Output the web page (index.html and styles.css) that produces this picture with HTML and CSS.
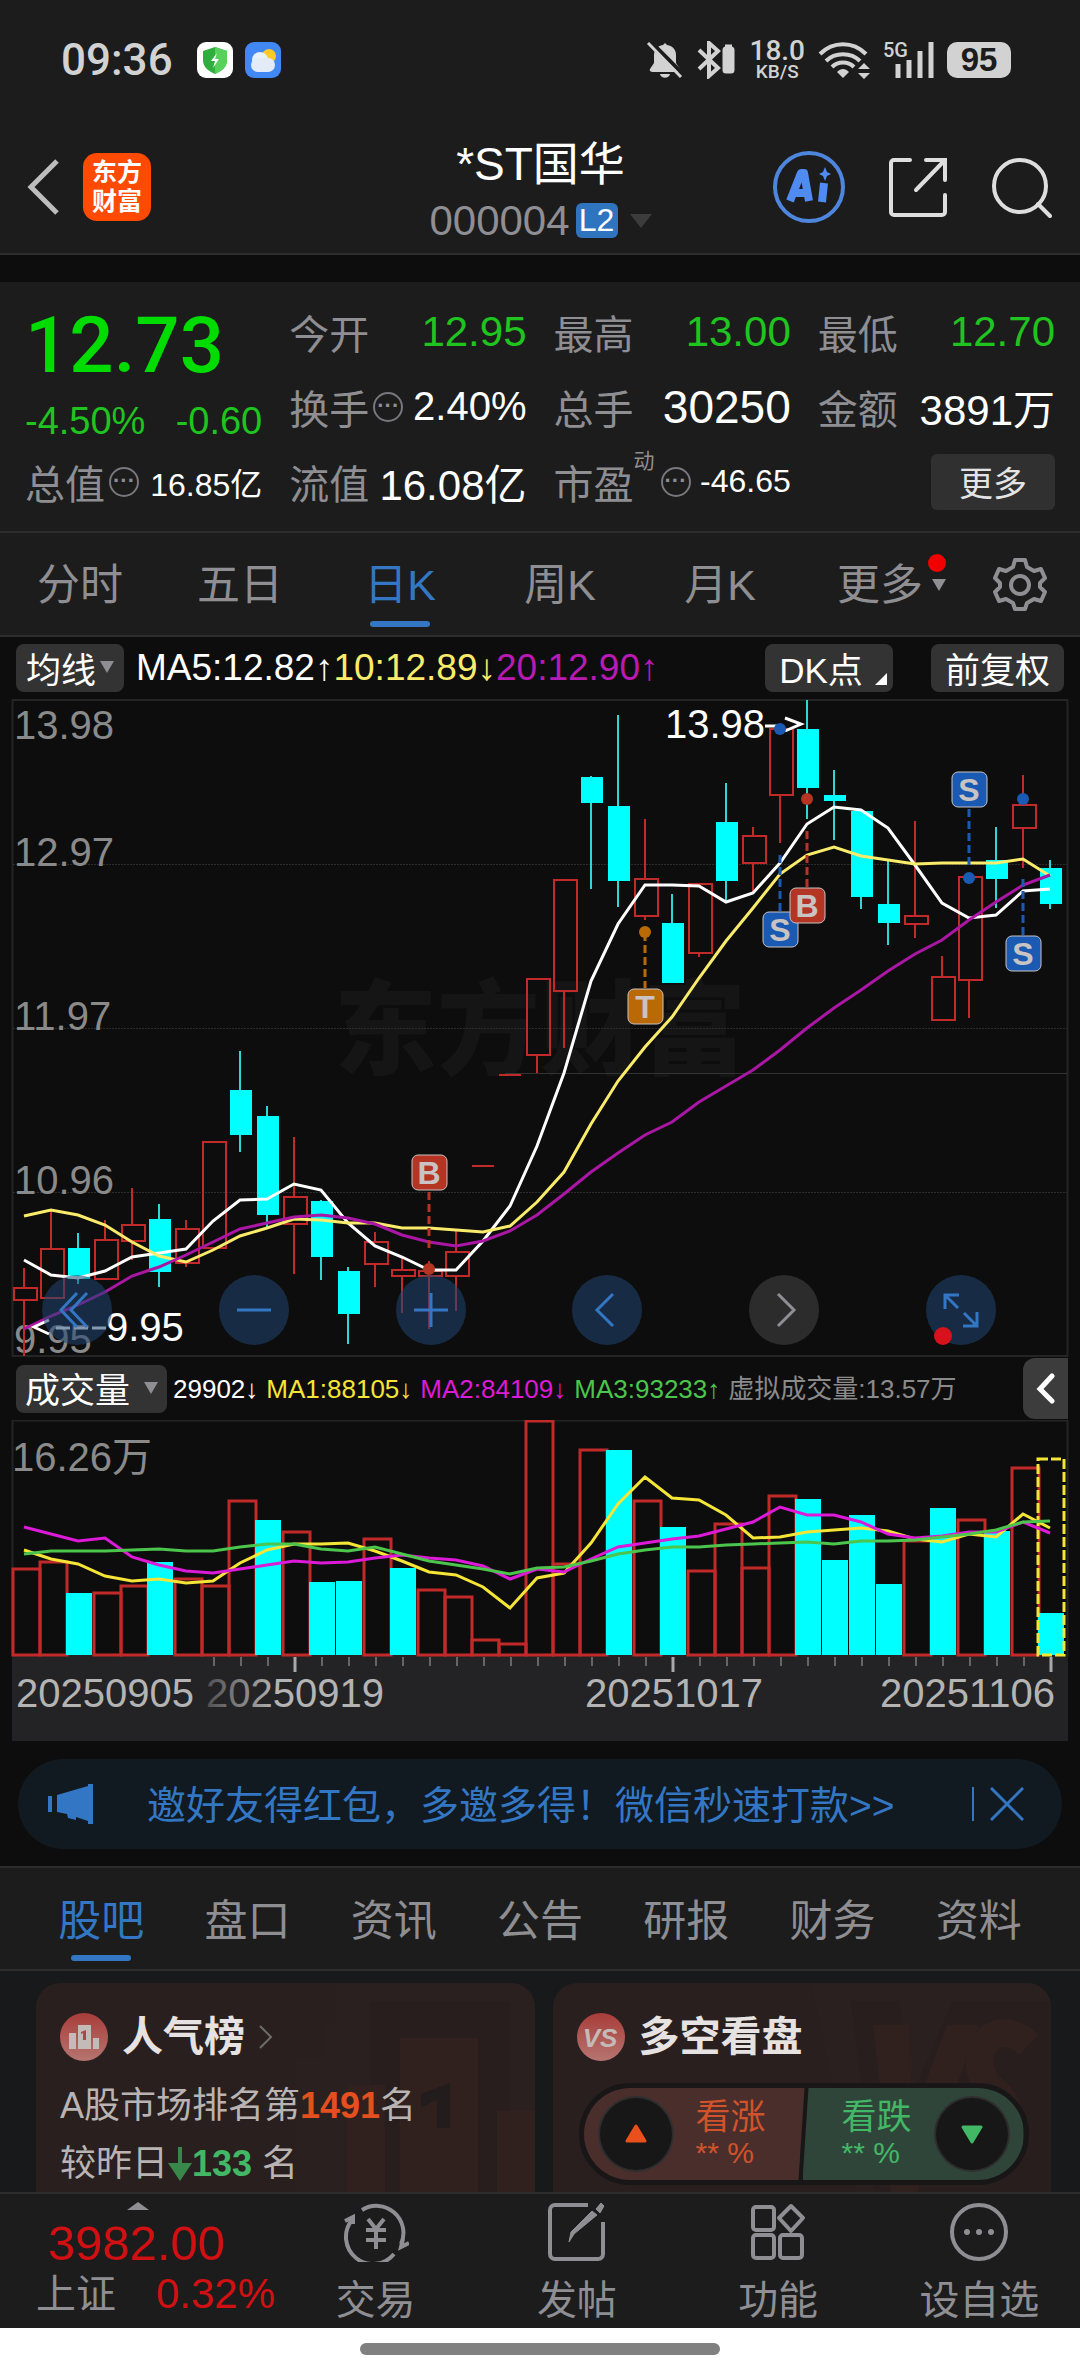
FILE: index.html
```html
<!DOCTYPE html>
<html lang="zh-CN">
<head>
    <meta charset="UTF-8">
    <meta name="viewport" content="width=device-width, initial-scale=1.0">
    <title>*ST国华 000004</title>
    <link rel="stylesheet" href="styles.css">
</head>
<body>
<div class="app">
    <div class="status-bar">
        <span class="clock">09:36</span>
        <svg class="status-app" width="36" height="36" viewBox="0 0 36 36">
            <rect width="36" height="36" rx="9" fill="#fff"/>
            <path d="M18 5l12 4v9c0 7-5 11-12 14C11 29 6 25 6 18V9z" fill="#2fae3e"/>
            <path d="M18 5l12 4v9c0 7-5 11-12 14z" fill="#57d05c"/>
            <path d="M20 11l-6 8h4l-2 7 6-9h-4z" fill="#fff"/>
        </svg>
        <svg class="status-app" width="36" height="36" viewBox="0 0 36 36">
            <rect width="36" height="36" rx="9" fill="#4288f5"/>
            <circle cx="24" cy="14" r="7" fill="#ffc928"/>
            <circle cx="15" cy="18" r="8" fill="#e9f1fb"/>
            <rect x="6" y="16" width="24" height="14" rx="7" fill="#e3ecf6"/>
        </svg>
        <div class="status-right">
            <svg width="36" height="36" viewBox="0 0 36 36" fill="#d2d2d2">
                <path d="M18 1l2 2c6 1 9 5 9 10v8l4 6c0 2-1 3-3 3H6c-2 0-4-1-3-3l4-6v-8c0-5 3-9 9-10z"/>
                <path d="M13 32h10c-1 5-9 5-10 0z"/>
                <path d="M2 -2l34 34" stroke="#1c1c1c" stroke-width="4"/>
                <path d="M1 1l33 34" stroke="#d2d2d2" stroke-width="3"/>
            </svg>
            <svg width="40" height="38" viewBox="0 0 40 38" fill="none" stroke="#d2d2d2" stroke-width="4">
                <path d="M3 9l19 18-9 8V2l9 8L3 28"/>
                <rect x="28" y="7" width="9" height="24" rx="2" fill="#d2d2d2" stroke-width="3"/>
                <path d="M29 5h7" stroke-width="3"/>
            </svg>
            <div class="net-speed"><b>18.0</b><span>KB/S</span></div>
            <svg width="52" height="38" viewBox="0 0 52 38" fill="none" stroke="#d2d2d2" stroke-width="4">
                <path d="M2 13c13-13 33-13 46 0M8 20c9-9 25-9 34 0M14 26c6-6 16-6 22 0"/>
                <path d="M19 31c4-4 8-4 12 0l-6 6z" fill="#d2d2d2" stroke="none"/>
                <path d="M46 22l6 6H40zM46 38l6-6H40z" fill="#d2d2d2" stroke="none"/>
            </svg>
            <div class="signal">
                <span>5G</span>
                <svg width="40" height="38" viewBox="0 0 40 38" stroke="#d2d2d2" stroke-width="5">
                    <path d="M4 23v14M15 19v18M26 10v27M37 1v36"/>
                </svg>
            </div>
            <div class="battery">95</div>
        </div>
    </div>

    <header class="title-bar">
        <button class="icon-btn back" aria-label="返回">
            <svg width="34" height="56" viewBox="0 0 34 56" fill="none" stroke="#bdbdbd" stroke-width="5">
                <path d="M31 2L5 28l26 26"/>
            </svg>
        </button>
        <div class="brand"><span>东方</span><span>财富</span></div>
        <div class="stock">
            <h1>*ST国华</h1>
            <div class="code">000004<span class="level">L2</span><i class="caret dark"></i></div>
        </div>
        <div class="title-actions">
            <button class="icon-btn" aria-label="AI">
                <svg width="74" height="74" viewBox="0 0 74 74">
                    <circle cx="37" cy="37" r="34" fill="none" stroke="#4f86dd" stroke-width="4"/>
                    <g fill="none" stroke="#4f8bf0" stroke-width="8" stroke-linejoin="round">
                        <path d="M18 51l11-28h3l5 28M24 43h12M52 33l-2 19"/>
                    </g>
                    <path d="M53 17l2 5 4 2-4 2-2 5-2-5-4-2 4-2z" fill="#4f8bf0"/>
                </svg>
            </button>
            <button class="icon-btn" aria-label="分享">
                <svg width="60" height="62" viewBox="0 0 60 62" fill="none" stroke="#dedede" stroke-width="4" stroke-linecap="round">
                    <path d="M22 4H6a3 3 0 0 0-3 3v49a3 3 0 0 0 3 3h48a3 3 0 0 0 3-3V39"/>
                    <path d="M38 4h19v20M56 5L28 34"/>
                </svg>
            </button>
            <button class="icon-btn" aria-label="搜索">
                <svg width="62" height="62" viewBox="0 0 62 62" fill="none" stroke="#dedede" stroke-width="4" stroke-linecap="round">
                    <circle cx="30" cy="30" r="26"/>
                    <path d="M48 48l12 12"/>
                </svg>
            </button>
        </div>
    </header>

    <section class="quote">
        <div class="price-box">
            <div class="price">12.73</div>
            <div class="change"><span>-4.50%</span><span>-0.60</span></div>
        </div>
        <div class="cell"><span class="name">今开</span><b class="down">12.95</b></div>
        <div class="cell"><span class="name">最高</span><b class="down">13.00</b></div>
        <div class="cell"><span class="name">最低</span><b class="down">12.70</b></div>
        <div class="cell"><span class="name">换手</span><i class="tip">···</i><b class="mid">2.40%</b></div>
        <div class="cell"><span class="name">总手</span><b class="big">30250</b></div>
        <div class="cell"><span class="name">金额</span><b>3891万</b></div>
        <div class="cell"><span class="name">总值</span><i class="tip">···</i><b class="small">16.85亿</b></div>
        <div class="cell"><span class="name">流值</span><b>16.08亿</b></div>
        <div class="cell"><span class="name">市盈<sup>动</sup></span><i class="tip after-sup">···</i><b class="small">-46.65</b></div>
        <div class="cell"><button class="more">更多</button></div>
    </section>

    <nav class="period">
        <a href="#">分时</a>
        <a href="#">五日</a>
        <a href="#" class="active">日K</a>
        <a href="#">周K</a>
        <a href="#">月K</a>
        <a href="#" class="has-dot">更多<i class="caret"></i></a>
        <button class="icon-btn gear" aria-label="设置">
            <svg width="54" height="54" viewBox="0 0 54 54" fill="none" stroke="#8e8e93" stroke-width="4">
                <path d="M22 3h10l2 7 7 4 7-2 4 9-5 5v4l5 5-4 9-7-2-7 4-2 6H22l-2-6-7-4-7 2-4-9 5-5v-4l-5-5 4-9 7 2 7-4z" stroke-linejoin="round"/>
                <circle cx="27" cy="28" r="9"/>
            </svg>
        </button>
    </nav>

    <section class="chart">
        <div class="chart-head">
            <button class="chip">均线<i class="caret"></i></button>
            <div class="ma-values">
                <span class="white">MA5:12.82↑</span><span class="yellow">10:12.89↓</span><span class="purple">20:12.90↑</span>
            </div>
            <button class="chip dk">DK点<i class="corner"></i></button>
            <button class="chip right">前复权</button>
        </div>
        <div class="k-wrap">
            <svg id="kline" viewBox="0 698 1080 658"></svg>
            <div class="k-tools">
                <button aria-label="最左"><svg viewBox="0 0 70 70"><path d="M35 18L19 35l16 17M45 18L29 35l16 17"/></svg></button>
                <button aria-label="缩小"><svg viewBox="0 0 70 70"><path d="M18 35h34"/></svg></button>
                <button aria-label="放大"><svg viewBox="0 0 70 70"><path d="M18 35h34M35 18v34"/></svg></button>
                <button aria-label="左移"><svg viewBox="0 0 70 70"><path d="M41 19L25 35l16 16"/></svg></button>
                <button aria-label="右移" class="off"><svg viewBox="0 0 70 70"><path d="M29 19l16 16-16 16"/></svg></button>
                <button aria-label="全屏" class="full"><svg viewBox="0 0 70 70"><path d="M19 34V20h14M19 20l13 13M51 37v14H37M51 51L38 38"/></svg></button>
            </div>
        </div>
        <div class="chart-head vol-head">
            <button class="chip vol">成交量<i class="caret"></i></button>
            <div class="vol-values">
                <span class="white">29902↓</span>
                <span class="yellow2">MA1:88105↓</span>
                <span class="magenta">MA2:84109↓</span>
                <span class="green">MA3:93233↑</span>
                <span class="grey">虚拟成交量:13.57万</span>
            </div>
            <button class="fold" aria-label="展开">
                <svg width="20" height="32" viewBox="0 0 20 32" fill="none" stroke="#fff" stroke-width="5" stroke-linecap="round"><path d="M16 3L4 16l12 12"/></svg>
            </button>
        </div>
        <svg id="volume" viewBox="0 1419 1080 321"></svg>
    </section>

    <div class="banner">
        <svg width="46" height="40" viewBox="0 0 46 40" fill="#3377c4">
            <path d="M0 12h4v16H0zM9 11L40 2V0h5v40h-5v-3l-12-4v3l-8-2-1-4-10-2z"/>
        </svg>
        <a href="#">邀好友得红包，多邀多得！微信秒速打款&gt;&gt;</a>
        <button class="icon-btn close" aria-label="关闭">
            <svg width="34" height="34" viewBox="0 0 34 34" fill="none" stroke="#3377c4" stroke-width="3"><path d="M1 1l32 32M33 1L1 33"/></svg>
        </button>
    </div>

    <nav class="info-tabs">
        <a href="#" class="active">股吧</a>
        <a href="#">盘口</a>
        <a href="#">资讯</a>
        <a href="#">公告</a>
        <a href="#">研报</a>
        <a href="#">财务</a>
        <a href="#">资料</a>
    </nav>

    <main class="cards">
        <article class="card">
            <svg class="card-bg" width="260" height="210" viewBox="0 0 260 210">
                <path d="M60 0h200v210H20V75h30V40h10z" fill="#2a201f"/>
                <path d="M95 18h140v192H95z" fill="#271e1d"/>
                <path d="M125 55h78v155h-78zM72 102h38v108H72zM222 128h38v82h-38z" fill="#30201e"/>
                <path d="M175 100v45h-13v-28l-16 8v-14z" fill="#231c1c"/>
            </svg>
            <h2>
                <svg width="48" height="48" viewBox="0 0 48 48">
                    <circle cx="24" cy="24" r="24" fill="url(#badge)"/>
                    <path d="M9 20h7v16H9zM18 12h13v24H18zM33 25h6v11h-6z" fill="#c4bab8"/>
                    <path d="M26 17v10h-3v-7l-2 1v-2z" fill="#ad4845"/>
                    <defs><linearGradient id="badge" x2="0" y2="1"><stop offset="0" stop-color="#a83d3a"/><stop offset="1" stop-color="#b67570"/></linearGradient></defs>
                </svg>
                人气榜
                <svg class="go" width="14" height="24" viewBox="0 0 14 24" fill="none" stroke="#6f6b6b" stroke-width="2"><path d="M1 1l11 11L1 23"/></svg>
            </h2>
            <p>A股市场排名第<b class="orange">1491</b>名</p>
            <p>较昨日<svg width="24" height="34" viewBox="0 0 24 34" fill="#38884c"><path d="M10 0h4v16h10L12 34 0 16h10z"/></svg><b class="rank-down">133</b> 名</p>
        </article>
        <article class="card">
            <svg class="card-bg" width="240" height="210" viewBox="0 0 240 210">
                <path d="M0 0h240v210H45z" fill="#2a201f"/>
                <path d="M40 18h48l14 92 40-92h98v192H65z" fill="#271e1d"/>
                <path d="M62 42h36l4 90 34-90h32l-62 168H80z" fill="#30201e"/>
                <path d="M218 62c-38-36-68 18-36 44 34 28 6 62-30 36" fill="none" stroke="#30201e" stroke-width="28"/>
            </svg>
            <h2>
                <svg width="48" height="48" viewBox="0 0 48 48">
                    <circle cx="24" cy="24" r="24" fill="url(#badge)"/>
                    <text x="23" y="34" class="vs">VS</text>
                </svg>
                多空看盘
            </h2>
            <div class="vote">
                <button class="vote-up">
                    <span class="knob"><svg width="24" height="20" viewBox="0 0 24 20"><path d="M12 2l9 15H3z" fill="#ea501b" stroke="#ea501b" stroke-width="3" stroke-linejoin="round"/></svg></span>
                    <span class="vote-text">看涨<small>** %</small></span>
                </button>
                <button class="vote-down">
                    <span class="vote-text">看跌<small>** %</small></span>
                    <span class="knob"><svg width="24" height="20" viewBox="0 0 24 20"><path d="M12 18l9-15H3z" fill="#42b766" stroke="#42b766" stroke-width="3" stroke-linejoin="round"/></svg></span>
                </button>
            </div>
        </article>
    </main>

    <footer class="bottom-bar">
        <div class="index-box">
            <i class="caret up"></i>
            <div class="index-value">3982.00</div>
            <div class="index-row"><span>上证</span><b>0.32%</b></div>
        </div>
        <a href="#">
            <svg width="66" height="60" viewBox="0 0 66 60">
                <path d="M19 8A27 27 0 0 1 58 42M51 52A27 27 0 0 1 9 18M2 19l8-4v7M66 41l-8 4 2-8"/>
                <path d="M25 17l8 10 8-10M23 28h20M23 38h20M33 27v20"/>
            </svg>
            交易
        </a>
        <a href="#">
            <svg width="60" height="60" viewBox="0 0 60 60">
                <path d="M41 3H8a5 5 0 0 0-5 5v44a5 5 0 0 0 5 5h43a5 5 0 0 0 5-5V20"/>
                <path d="M27 32l-5 8 2-10L45 9l5 4z" fill="#8e8e93" stroke-width="1"/>
                <path d="M49 7l5-6 3 3-4 7z" fill="#8e8e93" stroke-width="1"/>
            </svg>
            发帖
        </a>
        <a href="#">
            <svg width="60" height="60" viewBox="0 0 60 60">
                <rect x="5" y="5" width="21" height="23" rx="3"/>
                <rect x="5" y="33" width="21" height="23" rx="3"/>
                <rect x="32" y="33" width="22" height="23" rx="3"/>
                <path d="M43 4l12 12-12 13-12-13z" stroke-linejoin="round"/>
            </svg>
            功能
        </a>
        <a href="#">
            <svg width="60" height="60" viewBox="0 0 60 60">
                <circle cx="30" cy="30" r="27"/>
                <g fill="#8e8e93" stroke="none"><circle cx="18" cy="30" r="3"/><circle cx="30" cy="30" r="3"/><circle cx="42" cy="30" r="3"/></g>
            </svg>
            设自选
        </a>
    </footer>
    <div class="home-bar"><span></span></div>
</div>
<script src="script.js"></script>
</body>
</html>
```
FILE: styles.css
```css
* {
    box-sizing: border-box;
}
body {
    margin: 0;
    background-color: #0d0d0d;
    color: #fff;
    font-family: "Liberation Sans", "Noto Sans CJK SC", sans-serif;
    font-size: 40px;
}
a {
    color: inherit;
    text-decoration: none;
}
button {
    font-family: inherit;
    color: inherit;
    border: none;
    cursor: pointer;
}
b, i, h1, h2 {
    font-weight: normal;
    font-style: normal;
}
svg {
    display: block;
}
.app {
    display: flex;
    flex-direction: column;
    height: 100vh;
}
.app > * {
    flex-shrink: 0;
}
.icon-btn {
    background: none;
    padding: 0;
}
.caret {
    display: inline-block;
    border: 7px solid transparent;
    border-top: 12px solid #8e8e93;
    border-bottom: none;
}
.caret.dark {
    border-width: 14px 11px 0;
    border-top-color: #3c3c3c;
    margin-left: 12px;
}
.caret.up {
    border-width: 0 11px 8px;
    border-bottom: 8px solid #8e8e93;
}

/* status bar */
.status-bar {
    display: flex;
    align-items: center;
    height: 120px;
    padding: 0 69px 0 61px;
    background-color: #1c1c1c;
    color: #d2d2d2;
}
.clock {
    font-family: Roboto, sans-serif;
    font-weight: 500;
    font-size: 44px;
    margin-right: 12px;
}
.status-app {
    margin-left: 12px;
}
.status-right {
    display: flex;
    align-items: center;
    gap: 13px;
    margin-left: auto;
}
.net-speed {
    font-family: Roboto, sans-serif;
    text-align: center;
    font-weight: 500;
    font-size: 19px;
    line-height: 18px;
}
.net-speed b {
    display: block;
    font-size: 28px;
    font-weight: 500;
    line-height: 24px;
}
.net-speed span {
    display: block;
}
.signal {
    display: flex;
    align-items: flex-start;
}
.signal span {
    font: 500 20px/18px Roboto, sans-serif;
    margin-right: -14px;
}
.battery {
    width: 64px;
    height: 36px;
    border-radius: 10px;
    background-color: #d2d2d2;
    color: #1c1c1c;
    font: bold 33px/36px "Liberation Sans", sans-serif;
    text-align: center;
}

/* title bar */
.title-bar {
    display: flex;
    align-items: center;
    height: 135px;
    padding: 0 28px 0 26px;
    background-color: #1c1c1c;
    border-bottom: 2px solid #2d2d2d;
}
.brand {
    display: flex;
    flex-direction: column;
    justify-content: center;
    align-items: center;
    width: 68px;
    height: 68px;
    margin-left: 23px;
    border-radius: 14px;
    background-color: #ff4a03;
    font-size: 25px;
    font-weight: bold;
    line-height: 29px;
}
.stock {
    flex: 1;
    text-align: center;
    padding: 6px 0 0 158px;
}
.stock h1 {
    margin: 0;
    font-size: 46px;
    line-height: 62px;
}
.code {
    display: flex;
    align-items: center;
    justify-content: center;
    color: #8e8e93;
    font-size: 42px;
    line-height: 52px;
}
.level {
    margin-left: 6px;
    width: 42px;
    border-radius: 6px;
    background-color: #2f74bf;
    color: #fff;
    font-size: 32px;
    line-height: 35px;
}
.title-actions {
    display: flex;
    align-items: center;
    gap: 42px;
}

/* quote */
.quote {
    display: grid;
    grid-template-columns: repeat(4, 1fr);
    grid-auto-rows: 75px;
    column-gap: 27px;
    margin-top: 27px;
    padding: 12px 25px;
    background-color: #1c1c1c;
    border-bottom: 2px solid #2d2d2d;
}
.price-box {
    grid-row: span 2;
    color: #00dc00;
}
.price {
    font-family: Roboto, sans-serif;
    font-weight: 500;
    font-size: 78px;
    line-height: 104px;
}
.change {
    display: flex;
    justify-content: space-between;
    color: #1fc41f;
    font-size: 38px;
    line-height: 46px;
}
.cell {
    display: flex;
    align-items: center;
    white-space: nowrap;
}
.cell .name {
    position: relative;
    color: #8e8e93;
}
.cell sup {
    position: absolute;
    left: 100%;
    top: -4px;
    font-size: 21px;
    line-height: 24px;
}
.cell b {
    margin-left: auto;
    font-size: 42px;
}
.cell .big {
    font-size: 46px;
}
.cell .mid {
    font-size: 40px;
}
.cell .small {
    font-size: 32px;
}
.cell .down {
    color: #1fc41f;
}
.tip {
    width: 30px;
    height: 30px;
    margin-left: 4px;
    border: 2px solid #77777c;
    border-radius: 50%;
    color: #8e8e93;
    font: bold 22px/24px "Liberation Sans", sans-serif;
    text-align: center;
}
.after-sup {
    margin-left: 27px;
}
.more {
    margin-left: auto;
    width: 124px;
    height: 56px;
    border-radius: 6px;
    background-color: #303030;
    color: #e4e4e4;
    font-size: 34px;
}

/* period tabs */
.period {
    display: flex;
    height: 104px;
    background-color: #1c1c1c;
    border-bottom: 2px solid #2d2d2d;
    color: #8e8e93;
    font-size: 43px;
    line-height: 104px;
    text-align: center;
}
.period a {
    position: relative;
    flex: 4;
}
.gear {
    flex: 3;
    display: flex;
    align-items: center;
    justify-content: center;
}
.active {
    position: relative;
    color: #3377c4;
}
.active::after {
    content: "";
    position: absolute;
    left: 50%;
    bottom: 8px;
    width: 60px;
    height: 6px;
    margin-left: -30px;
    border-radius: 3px;
    background-color: #3377c4;
}
.period .caret {
    position: absolute;
    right: 14px;
    top: 46px;
}
.has-dot::before {
    content: "";
    position: absolute;
    right: 14px;
    top: 21px;
    width: 18px;
    height: 18px;
    border-radius: 50%;
    background-color: #f00000;
}

/* chart */
.chart-head {
    display: flex;
    align-items: center;
    height: 62px;
    padding: 0 16px;
    white-space: nowrap;
}
.chip {
    display: flex;
    align-items: center;
    justify-content: center;
    width: 108px;
    height: 48px;
    padding: 0 0 2px;
    border-radius: 8px;
    background-color: #333;
    font-size: 35px;
}
.chip .caret {
    margin-left: 4px;
}
.ma-values {
    margin-left: 12px;
    font-size: 37px;
}
.white { color: #fff; }
.yellow { color: #faec6a; }
.purple { color: #b81ab3; }
.yellow2 { color: #f5e536; }
.magenta { color: #dc1ad7; }
.green { color: #4bc54b; }
.grey { color: #8a8a8a; }
.dk {
    position: relative;
    width: 128px;
    margin-left: auto;
    padding-right: 16px;
}
.corner {
    position: absolute;
    right: 6px;
    bottom: 7px;
    border-left: 12px solid transparent;
    border-bottom: 12px solid #fff;
}
.right {
    width: 133px;
    margin-left: 38px;
}
.k-wrap {
    position: relative;
}
.chart > svg, .k-wrap > svg {
    width: 100%;
    height: auto;
}
.k-tools {
    position: absolute;
    left: 42px;
    right: 84px;
    bottom: 12px;
    display: flex;
    justify-content: space-between;
}
.k-tools button {
    position: relative;
    width: 70px;
    height: 70px;
    padding: 0;
    border-radius: 50%;
    background-color: rgba(32, 70, 115, 0.55);
}
.k-tools path {
    fill: none;
    stroke: #3377c4;
    stroke-width: 3;
}
.k-tools .off {
    background-color: #2c2c2c;
}
.k-tools .off path {
    stroke: #8e8e93;
}
.full::after {
    content: "";
    position: absolute;
    left: 8px;
    bottom: 0;
    width: 18px;
    height: 18px;
    border-radius: 50%;
    background-color: #d8121c;
}
.vol-head {
    height: 63px;
    padding-right: 12px;
}
.vol {
    width: 151px;
}
.vol .caret {
    margin-left: 14px;
}
.vol-values {
    display: flex;
    align-items: baseline;
    gap: 8px;
    margin-left: 6px;
    padding-bottom: 4px;
    font-size: 26px;
}
.fold {
    display: flex;
    align-items: center;
    justify-content: center;
    width: 45px;
    height: 61px;
    margin-left: auto;
    padding: 0;
    border-radius: 12px 0 0 12px;
    background-color: #3c3c3c;
}
#kline text, #volume text {
    font-size: 40px;
    fill: #8a8a8a;
}
#kline .extreme {
    fill: #fff;
}
#kline .watermark {
    font-size: 103px;
    font-weight: 900;
    fill: #151515;
}
#kline .tag {
    font-size: 32px;
    font-weight: bold;
    text-anchor: middle;
    fill: #c9c3c3;
}
#volume .date {
    fill: #b4b4b4;
}

/* banner */
.banner {
    display: flex;
    align-items: center;
    height: 90px;
    margin: 18px 18px 17px;
    padding: 0 38px 0 30px;
    border-radius: 45px;
    background-color: #111921;
    color: #3377c4;
    font-size: 39px;
}
.banner a {
    margin-left: 53px;
    padding-bottom: 4px;
}
.close {
    margin-left: auto;
    padding-left: 16px;
    border-left: 2px solid #3377c4;
}

/* info tabs */
.info-tabs {
    display: flex;
    height: 105px;
    padding: 0 28px;
    background-color: #1c1c1c;
    border-top: 2px solid #2d2d2d;
    border-bottom: 2px solid #2d2d2d;
    color: #8e8e93;
    font-size: 43px;
    line-height: 106px;
    text-align: center;
}
.info-tabs a {
    flex: 1;
}

/* cards */
.app .cards {
    flex: 1 1 0;
    display: flex;
    gap: 18px;
    padding: 12px 29px 0 36px;
    overflow: hidden;
    background-color: #18191a;
}
.card {
    position: relative;
    flex: 1;
    height: 240px;
    padding: 24px;
    border-radius: 24px;
    background-color: #281f1e;
    overflow: hidden;
}
.card > * {
    position: relative;
}
.card .card-bg {
    position: absolute;
    right: 0;
    top: 0;
}
.card h2 {
    display: flex;
    align-items: center;
    gap: 14px;
    margin: 0 0 10px;
    font-size: 41px;
    font-weight: bold;
    line-height: 60px;
    color: #e6e2e2;
}
.vs {
    font: italic bold 26px "Liberation Sans", sans-serif;
    text-anchor: middle;
    fill: #c4bab8;
}
.card p {
    display: flex;
    align-items: center;
    margin: 0;
    font-size: 36px;
    line-height: 58px;
    color: #b9b4b3;
    white-space: pre;
}
.card p b {
    font-weight: bold;
}
.card .orange {
    color: #e34f1e;
}
.card .rank-down {
    color: #42b766;
}
.vote {
    display: flex;
    width: 450px;
    height: 102px;
    margin: 16px 0 0 2px;
    border: 5px solid #191617;
    border-radius: 51px;
    background-color: #191617;
    overflow: hidden;
}
.vote button {
    flex: 1;
    display: flex;
    align-items: center;
    padding: 0 14px;
}
.vote .vote-up {
    background-color: #4a2e2c;
    color: #d0532b;
    clip-path: polygon(0 0, 100% 0, calc(100% - 6px) 100%, 0 100%);
}
.vote .vote-down {
    margin-left: -2px;
    background-color: #30453a;
    color: #42b766;
    justify-content: flex-end;
    clip-path: polygon(6px 0, 100% 0, 100% 100%, 0 100%);
}
.knob {
    display: flex;
    align-items: center;
    justify-content: center;
    width: 76px;
    height: 76px;
    border: 2px solid rgba(255, 255, 255, 0.1);
    border-radius: 50%;
    background-color: #171718;
}
.vote-text {
    text-align: left;
    font-size: 35px;
    line-height: 38px;
    margin: 0 22px;
}
.vote-text small {
    display: block;
    font-size: 30px;
    line-height: 34px;
}

/* bottom bar */
.bottom-bar {
    display: flex;
    height: 136px;
    background-color: #1c1c1c;
    border-top: 2px solid #2d2d2d;
    color: #8e8e93;
}
.index-box {
    width: 275px;
    padding: 8px 0 0 36px;
}
.index-box .caret {
    display: block;
    width: 0;
    margin-left: 91px;
}
.index-value {
    padding-left: 12px;
    color: #d01012;
    font-size: 49px;
    line-height: 66px;
}
.index-row {
    display: flex;
    justify-content: space-between;
    align-items: center;
    font-size: 40px;
    line-height: 36px;
}
.index-row b {
    color: #d01012;
    font-size: 42px;
}
.bottom-bar a {
    flex: 1;
    display: flex;
    flex-direction: column;
    align-items: center;
    padding-top: 8px;
    font-size: 40px;
    line-height: 40px;
}
.bottom-bar a svg {
    margin-bottom: 18px;
    fill: none;
    stroke: #8e8e93;
    stroke-width: 4;
}
.home-bar {
    display: flex;
    justify-content: center;
    height: 48px;
    padding-top: 15px;
    background-color: #fff;
}
.home-bar span {
    width: 33.3%;
    height: 12px;
    border-radius: 6px;
    background-color: #808080;
}
```
FILE: script.js
```js
// [up, bodyTop, bodyBottom, high, low, volumeTop]
const days = [
    [1, 1287, 1299, 1267, 1355, 1568], [1, 1248, 1297, 1210, 1297, 1561], [0, 1247, 1278, 1232, 1283, 1592],
    [1, 1239, 1278, 1219, 1278, 1592], [1, 1224, 1240, 1187, 1259, 1585], [0, 1218, 1271, 1203, 1286, 1561],
    [1, 1228, 1262, 1219, 1266, 1578], [1, 1141, 1247, 1141, 1247, 1585], [0, 1089, 1134, 1050, 1151, 1500],
    [0, 1115, 1214, 1105, 1227, 1519], [1, 1196, 1223, 1136, 1273, 1531], [0, 1200, 1256, 1199, 1279, 1581],
    [0, 1270, 1313, 1266, 1343, 1580], [1, 1241, 1263, 1231, 1286, 1538], [1, 1269, 1275, 1257, 1312, 1567],
    [1, 1270, 1275, 1260, 1328, 1589], [1, 1251, 1275, 1230, 1310, 1596], [1, 1165, 1165, 1165, 1165, 1639],
    [1, 1074, 1074, 1074, 1074, 1643], [1, 978, 1054, 978, 1072, 1420], [1, 879, 990, 879, 1047, 1563],
    [0, 776, 802, 775, 888, 1449], [0, 805, 880, 714, 906, 1449], [1, 878, 915, 818, 919, 1500],
    [0, 922, 982, 893, 982, 1526], [1, 883, 952, 883, 956, 1570], [0, 821, 880, 782, 899, 1523],
    [1, 835, 862, 826, 893, 1567], [1, 728, 794, 728, 842, 1495], [0, 728, 787, 699, 818, 1498],
    [0, 794, 800, 769, 839, 1559], [0, 810, 896, 810, 908, 1514], [0, 903, 922, 858, 944, 1583],
    [1, 915, 923, 820, 937, 1540], [1, 976, 1019, 955, 1019, 1507], [1, 876, 979, 876, 1017, 1519],
    [0, 859, 878, 826, 907, 1530], [1, 804, 827, 774, 867, 1467], [0, 867, 903, 859, 908, 1612]
];
// volume bars coloured by their own flag: 1 hollow red, 0 solid cyan
const volUp = [1, 1, 0, 1, 1, 0, 1, 1, 1, 0, 1, 0, 0, 1, 0, 1, 1, 1, 1, 1, 1, 1, 0, 1, 0, 1, 1, 1, 1, 0, 0, 0, 0, 1, 0, 1, 0, 1, 0];

const ma5 = [1259, 1274, 1277, 1270, 1256, 1252, 1248, 1220, 1199, 1198, 1183, 1189, 1222, 1245, 1256, 1269, 1269, 1240, 1205, 1145, 1072, 980, 923, 884, 884, 885, 901, 892, 862, 823, 806, 809, 827, 864, 902, 917, 914, 890, 888];
const ma10 = [1215, 1209, 1214, 1224, 1241, 1255, 1261, 1249, 1235, 1227, 1218, 1219, 1222, 1222, 1227, 1227, 1229, 1231, 1225, 1201, 1171, 1123, 1080, 1046, 1016, 977, 940, 907, 873, 854, 846, 855, 859, 863, 862, 862, 862, 858, 875];
const ma20 = [1328, 1315, 1304, 1291, 1275, 1266, 1254, 1241, 1228, 1222, 1216, 1214, 1217, 1223, 1234, 1241, 1245, 1240, 1230, 1214, 1193, 1171, 1152, 1134, 1121, 1101, 1085, 1069, 1049, 1027, 1007, 989, 970, 953, 939, 919, 901, 884, 874];
const vma1 = [1549, 1558, 1563, 1575, 1580, 1578, 1582, 1580, 1562, 1549, 1543, 1543, 1542, 1550, 1560, 1571, 1574, 1586, 1607, 1577, 1572, 1542, 1503, 1476, 1497, 1499, 1514, 1537, 1536, 1531, 1529, 1527, 1530, 1538, 1541, 1533, 1536, 1513, 1527];
const vma2 = [1526, 1533, 1540, 1537, 1556, 1564, 1570, 1572, 1568, 1564, 1560, 1562, 1561, 1557, 1554, 1557, 1559, 1565, 1578, 1568, 1571, 1558, 1546, 1542, 1538, 1535, 1528, 1521, 1506, 1514, 1514, 1521, 1533, 1537, 1535, 1531, 1531, 1521, 1532];
const vma3 = [1553, 1550, 1550, 1550, 1549, 1548, 1550, 1550, 1546, 1543, 1543, 1548, 1550, 1546, 1553, 1560, 1564, 1568, 1573, 1567, 1566, 1560, 1553, 1549, 1546, 1546, 1544, 1543, 1542, 1541, 1543, 1540, 1540, 1539, 1536, 1533, 1529, 1521, 1520];

const RED = '#c22a2a';
const CYAN = '#00ffff';
const xAt = i => 24 + 27 * i;

function line(x1, y1, x2, y2, color, width, extra) {
    return `<line x1="${x1}" y1="${y1}" x2="${x2}" y2="${y2}" stroke="${color}" stroke-width="${width}" ${extra || ''}/>`;
}
function rect(x, y, w, h, fill, stroke, extra) {
    return `<rect x="${x}" y="${y}" width="${w}" height="${h}" fill="${fill}" stroke="${stroke || 'none'}" ${extra || ''}/>`;
}
function curve(values, color) {
    const points = values.map((y, i) => xAt(i) + ',' + y).join(' ');
    return `<polyline points="${points}" fill="none" stroke="${color}" stroke-width="3"/>`;
}
function label(x, y, text, cls, extra) {
    return `<text x="${x}" y="${y}" class="${cls || ''}" ${extra || ''}>${text}</text>`;
}

function drawKline() {
    let out = label(334, 1066, '东方财富', 'watermark');
    out += rect(12.5, 699, 1055, 656, 'none', '#242424', 'stroke-width="2"');
    [863.5, 1027.5, 1191.5].forEach(y => {
        out += line(13, y, 1067, y, '#2c2c2c', 1, 'stroke-dasharray="2 1"');
    });
    out += line(505, 1072.5, 1067, 1072.5, '#333', 1);
    [['13.98', 738], ['12.97', 865], ['11.97', 1029], ['10.96', 1193], ['9.95', 1352]].forEach(t => {
        out += label(14, t[1], t[0]);
    });

    days.forEach(([up, top, bottom, high, low], i) => {
        const x = xAt(i);
        if (top === bottom) {
            out += line(x - 11, top, x + 11, top, RED, 2);
        } else if (up) {
            out += line(x, high, x, top, RED, 2) + line(x, bottom, x, low, RED, 2);
            out += rect(x - 10, top, 23, bottom - top, 'none', RED, 'stroke-width="2"');
        } else {
            out += line(x, high, x, low, '#30d5d5', 2);
            out += rect(x - 10, top, 22, bottom - top, CYAN);
        }
    });
    out += curve(ma5, '#fff') + curve(ma10, '#faec6a') + curve(ma20, '#aa17a5');

    // highest and lowest price
    out += label(665, 737, '13.98', 'extreme');
    out += '<path d="M765 725h15M785 717l16 6-16 7" fill="none" stroke="#fff" stroke-width="3"/>';
    out += label(106, 1340, '9.95', 'extreme');
    out += '<path d="M49 1319l-15 7 15 7M56 1327h14M74 1327h14M92 1327h14" fill="none" stroke="#fff" stroke-width="3"/>';

    // trade marks: letter, x, box top, line from, line to, dot y, color
    [
        ['B', 429, 1154, 1191, 1247, 1268, '#b53525'],
        ['T', 645, 988, 932, 987, 931, '#ba6a05'],
        ['S', 780, 911, 854, 910, 728, '#1b5ab2'],
        ['B', 807, 887, 830, 886, 798, '#b53525'],
        ['S', 969, 771, 808, 864, 877, '#1b5ab2'],
        ['S', 1023, 935, 878, 934, 798, '#1b5ab2']
    ].forEach(([letter, x, top, from, to, dot, color]) => {
        out += line(x, from, x, to, color, 3, 'stroke-dasharray="8 4"');
        out += `<circle cx="${x}" cy="${dot}" r="6" fill="${color}"/>`;
        out += rect(x - 17, top, 35, 35, color, '#c9c3c3', 'rx="6"');
        out += label(x, top + 29, letter, 'tag');
    });
    document.getElementById('kline').innerHTML = out;
}

function drawVolume() {
    let out = rect(12.5, 1419.5, 1055, 235, 'none', '#242424', 'stroke-width="2"');
    out += label(12, 1470, '16.26万');
    out += rect(12, 1655, 1056, 85, '#232325');
    days.forEach((d, i) => {
        const x = xAt(i);
        const top = d[5];
        if (volUp[i]) {
            out += rect(x - 11, top, 27, 1654 - top, 'none', RED, 'stroke-width="3"');
        } else {
            out += rect(x - 12, top, 26, 1654 - top, CYAN);
        }
        if (i >= 7) {
            const major = i === 10 || i === 24 || i === 38;
            out += line(x + 1, 1656, x + 1, major ? 1671 : 1665, '#a8a8a8', major ? 3 : 1);
        }
    });
    out += rect(1038, 1458, 26, 196, 'none', '#f5e536', 'stroke-width="3" stroke-dasharray="10 3"');
    out += curve(vma1, '#f5e536') + curve(vma2, '#dc1ad7') + curve(vma3, '#4bc54b');
    out += '<defs><linearGradient id="fade"><stop offset="0" stop-color="#505052"/><stop offset="0.4" stop-color="#b4b4b4"/></linearGradient></defs>';
    out += label(16, 1706, '20250905', 'date');
    out += label(384, 1706, '20250919', 'date', 'text-anchor="end" style="fill: url(#fade)"');
    out += label(674, 1706, '20251017', 'date', 'text-anchor="middle"');
    out += label(1055, 1706, '20251106', 'date', 'text-anchor="end"');
    document.getElementById('volume').innerHTML = out;
}

drawKline();
drawVolume();
```
